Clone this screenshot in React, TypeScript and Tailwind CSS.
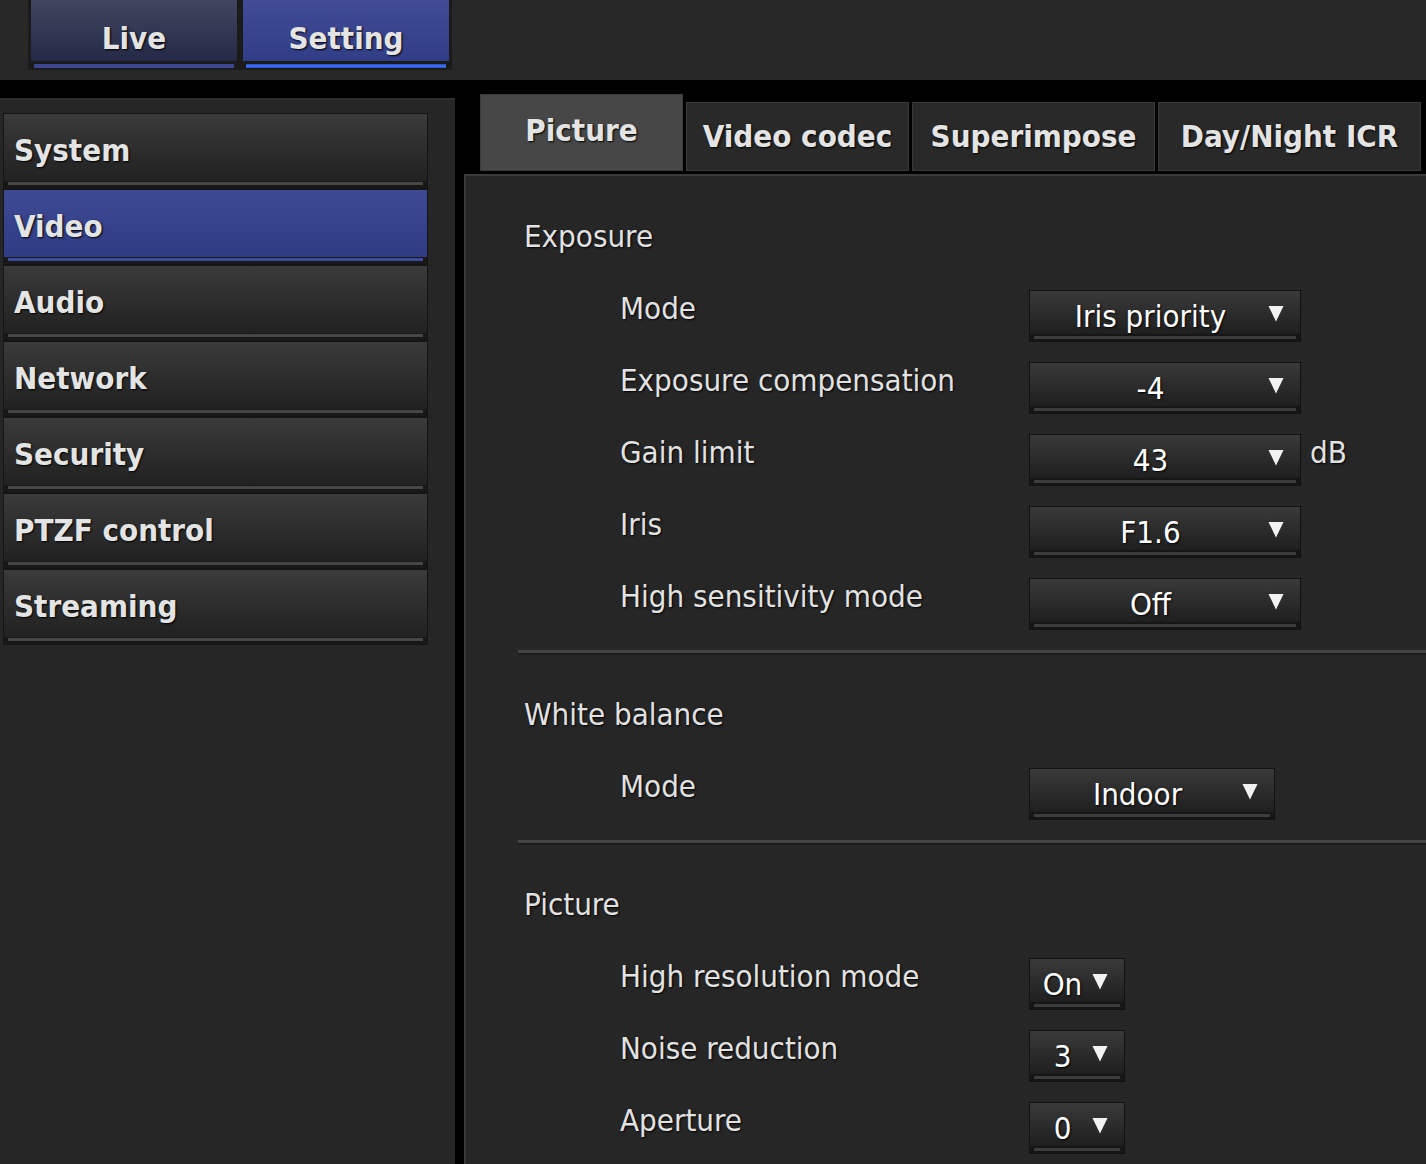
import React from "react";

const FONT = "font-['DejaVu_Sans_Condensed','DejaVu_Sans',Verdana,sans-serif]";
const SHADOW = "[text-shadow:1px_1px_2px_#000]";

function SideItem({ label, active }: { label: string; active?: boolean }) {
  return (
    <div className="w-[425px] h-[76px] flex flex-col bg-[#181818] border border-[#141414]">
      <div
        className={
          "h-[67px] flex items-center pl-[10px] pt-[6px] text-[31px] font-bold text-[#e4e4e4] " +
          SHADOW +
          (active
            ? " bg-gradient-to-b from-[#3e4b94] to-[#2f3b83]"
            : " bg-gradient-to-b from-[#3b3b3b] to-[#212121]")
        }
      >
        {label}
      </div>
      <div className="flex-1 flex flex-col px-[4px] pt-[1px]">
        <div className={"h-[3px] " + (active ? "bg-[#3c4a9c]" : "bg-[#464646]")} />
      </div>
    </div>
  );
}

function TopTab({ label, active }: { label: string; active?: boolean }) {
  return (
    <div className="w-[208px] h-[70px] flex flex-col">
      <div
        className={
          "h-[62px] flex items-center justify-center pt-[16px] text-[31px] font-bold text-[#e4e4e4] border-x border-b border-[#1a1a1a] " +
          SHADOW +
          (active
            ? " bg-gradient-to-b from-[#424c96] to-[#313d87]"
            : " bg-gradient-to-b from-[#41465f] to-[#242947]")
        }
      >
        {label}
      </div>
      <div className="px-[4px] pt-[2px]">
        <div
          className={
            "h-[4px] " +
            (active ? "bg-[#3a6cf2] border-y border-[#2f55c8]" : "bg-[#3a4690]")
          }
        />
      </div>
    </div>
  );
}

function Arrow() {
  return (
    <svg width="16" height="17" viewBox="0 0 16 17" className="shrink-0">
      <polygon points="0.5,1 15.5,1 8,16.5" fill="#f2f2f2" />
    </svg>
  );
}

function Select({ value, width }: { value: string; width: string }) {
  return (
    <div className={"h-[52px] flex flex-col bg-[#161616] border border-[#121212] " + width}>
      <div className="h-[43px] flex items-center bg-gradient-to-b from-[#3a3a3a] to-[#1f1f1f] pr-[16px]">
        <div className={"flex-1 text-center text-[31px] text-white pt-[8px] " + SHADOW}>
          {value}
        </div>
        <div className="-ml-[3px] mt-[1px]">
          <Arrow />
        </div>
      </div>
      <div className="flex-1 px-[4px] pt-[2px]">
        <div className="h-[3px] bg-[#3c3c3c]" />
      </div>
    </div>
  );
}

function Row({
  label,
  value,
  width,
  suffix,
}: {
  label: string;
  value: string;
  width: string;
  suffix?: string;
}) {
  return (
    <div className="h-[72px] flex items-start pl-[154px]">
      <div className={"w-[409px] leading-[72px] text-[31px] text-[#e2e2e2] " + SHADOW}>
        {label}
      </div>
      <div className="pt-[18px] flex items-start">
        <Select value={value} width={width} />
        {suffix && (
          <div className={"ml-[9px] leading-[36px] text-[31px] text-[#e2e2e2] " + SHADOW}>
            {suffix}
          </div>
        )}
      </div>
    </div>
  );
}

function Header({ label }: { label: string }) {
  return (
    <div className={"h-[72px] leading-[72px] pl-[58px] text-[31px] text-[#e2e2e2] " + SHADOW}>
      {label}
    </div>
  );
}

function Separator() {
  return (
    <div className="ml-[52px] mt-[18px] mb-[23px]">
      <div className="h-[3px] bg-[#444444]" />
      <div className="h-[2px] bg-[#1c1c1c]" />
    </div>
  );
}

function ContentTab({
  label,
  width,
  active,
}: {
  label: string;
  width: string;
  active?: boolean;
}) {
  return (
    <div
      className={
        "flex items-center justify-center text-[31px] font-bold text-[#e4e4e4] border border-[#3a3a3a] " +
        SHADOW +
        " " +
        width +
        (active ? " h-[77px] bg-[#474747] pb-[4px]" : " h-[69px] bg-[#292929]")
      }
    >
      {label}
    </div>
  );
}

export default function App() {
  return (
    <div className={"w-[1426px] h-[1164px] overflow-hidden bg-black flex flex-col " + FONT}>
      {/* Top bar */}
      <div className="h-[80px] shrink-0 bg-[#282828] pl-[28px]">
        <div className="w-[424px] h-[70px] bg-[#1b1b1b] flex gap-[4px] pl-[2px]">
          <TopTab label="Live" />
          <TopTab label="Setting" active />
        </div>
      </div>

      <div className="flex-1 flex">
        {/* Sidebar */}
        <div className="w-[455px] mt-[18px] bg-[#262626] border-t-2 border-[#2f2f2f] pt-[13px] pl-[3px] flex flex-col">
          <SideItem label="System" />
          <SideItem label="Video" active />
          <SideItem label="Audio" />
          <SideItem label="Network" />
          <SideItem label="Security" />
          <SideItem label="PTZF control" />
          <SideItem label="Streaming" />
        </div>

        {/* Main */}
        <div className="ml-[9px] flex-1 flex flex-col">
          <div className="h-[94px] shrink-0 flex items-end gap-[3px] pl-[16px] pb-[3px]">
            <ContentTab label="Picture" width="w-[203px]" active />
            <ContentTab label="Video codec" width="w-[223px]" />
            <ContentTab label="Superimpose" width="w-[243px]" />
            <ContentTab label="Day/Night ICR" width="w-[263px]" />
          </div>
          <div className="flex-1 bg-[#262626] border-t-2 border-l-2 border-[#3a3a3a] pt-[24px]">
            <Header label="Exposure" />
            <Row label="Mode" value="Iris priority" width="w-[272px]" />
            <Row label="Exposure compensation" value="-4" width="w-[272px]" />
            <Row label="Gain limit" value="43" width="w-[272px]" suffix="dB" />
            <Row label="Iris" value="F1.6" width="w-[272px]" />
            <Row label="High sensitivity mode" value="Off" width="w-[272px]" />
            <Separator />
            <Header label="White balance" />
            <Row label="Mode" value="Indoor" width="w-[246px]" />
            <Separator />
            <Header label="Picture" />
            <Row label="High resolution mode" value="On" width="w-[96px]" />
            <Row label="Noise reduction" value="3" width="w-[96px]" />
            <Row label="Aperture" value="0" width="w-[96px]" />
          </div>
        </div>
      </div>
    </div>
  );
}
